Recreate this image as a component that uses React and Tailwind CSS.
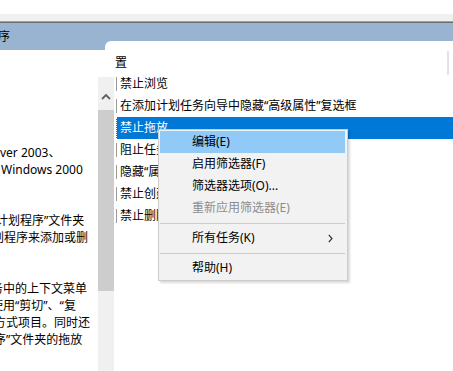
import React from "react";

const leftLines = [
  { t: "ver 2003、", ml: "ml-[0px]" },
  { t: "Windows 2000", ml: "ml-[1px]" },
  { t: "\u00a0", ml: "" },
  { t: "\u00a0", ml: "" },
  { t: "计划程序”文件夹", ml: "ml-[-4px]" },
  { t: "划程序来添加或删", ml: "ml-[-8px]" },
  { t: "\u00a0", ml: "" },
  { t: "\u00a0", ml: "" },
  { t: "务中的上下文菜单", ml: "ml-[-9px]" },
  { t: "使用“剪切”、“复", ml: "ml-[-9px]" },
  { t: "方式项目。同时还", ml: "ml-[-6px]" },
  { t: "序”文件夹的拖放", ml: "ml-[-6px]" },
];

const rows = [
  "禁止浏览",
  "在添加计划任务向导中隐藏“高级属性”复选框",
  "禁止拖放",
  "阻止任务运行或结束",
  "隐藏“属性”选项卡",
  "禁止创建新任务",
  "禁止删除任务",
];

function MenuItem({ children, active, disabled, arrow }) {
  return (
    <div
      className={
        "h-[22px] flex items-center pl-[32px] pr-[12px] mr-[2px] " +
        (active ? "bg-[#91c9f7] " : "") +
        (disabled ? "text-[#8d8d8d]" : "text-black")
      }
    >
      <span className="flex-1">{children}</span>
      {arrow && (
        <svg width="5" height="9" viewBox="0 0 5 9">
          <path d="M0.8 0.8 L4 4.5 L0.8 8.2" fill="none" stroke="#333" strokeWidth="1.2" />
        </svg>
      )}
    </div>
  );
}

function Sep() {
  return (
    <div className="h-[8px] flex items-center mr-[2px]">
      <div className="h-[1px] w-full bg-[#cccccc]" />
    </div>
  );
}

export default function App() {
  return (
    <div className="w-[453px] h-[371px] overflow-hidden bg-white relative font-['Noto_Sans','Noto_Sans_CJK_SC',sans-serif] text-[12px] text-black">
      <div className="h-[14px] bg-white" />
      <div className="h-[7px] bg-[#f0f0f0]" />
      <div className="h-[1px] bg-[#a0a0a0]" />
      <div className="h-[1px] bg-[#6d6d6d]" />
      <div className="flex h-[348px] bg-[#99b4d1]">
        {/* left description pane */}
        <div className="w-[98px] flex flex-col">
          <div className="h-[27px] flex items-center leading-[18px] ml-[-2px]">序</div>
          <div className="flex-1 bg-white overflow-hidden pt-[94px] leading-[17px] whitespace-nowrap">
            {leftLines.map((l, i) => (
              <div key={i} className={l.ml}>
                {l.t}
              </div>
            ))}
          </div>
        </div>
        {/* right pane */}
        <div className="flex-1 flex flex-col">
          <div className="h-[18px]" />
          <div className="flex-1 flex">
            <div className="w-[7px] flex flex-col">
              <div className="h-[9px]" />
              <div className="flex-1 bg-white" />
            </div>
            <div className="flex-1 bg-white rounded-tl-[6px] flex">
              {/* scrollbar */}
              <div className="ml-[-7px] w-[16px] flex flex-col">
                <div className="h-[36px]" />
                <div className="flex-1 bg-[#f0f0f0] flex flex-col">
                  <div className="h-[33px] flex justify-center pt-[16px]">
                    <svg width="10" height="7" viewBox="0 0 10 7">
                      <path d="M1 6 L5 2 L9 6" fill="none" stroke="#606060" strokeWidth="1.8" />
                    </svg>
                  </div>
                  <div className="h-[181px] bg-[#cdcdcd]" />
                </div>
              </div>
              {/* list */}
              <div className="flex-1 flex flex-col whitespace-nowrap overflow-hidden">
                <div className="h-[32px] flex justify-between items-start">
                  <div className="pl-[1px] pt-[13px] leading-[18px]">置</div>
                  <div className="w-[2px] h-[24px] mt-[10px] mr-[4px] bg-[#e3e3e3]" />
                </div>
                {rows.map((r, i) =>
                  i === 2 ? (
                    <div key={i} className="h-[22px] flex pl-[2px]">
                      <div className="flex-1 bg-[#0078d7] text-white border-l border-dotted border-white pl-[3px] flex items-center">
                        {r}
                      </div>
                    </div>
                  ) : (
                    <div key={i} className="h-[22px] flex items-center">
                      <div className="ml-[2px] w-[1px] h-[14px] bg-[#9a9a9a]" />
                      <div className="pl-[3px]">{r}</div>
                    </div>
                  )
                )}
              </div>
            </div>
          </div>
        </div>
      </div>

      {/* context menu */}
      <div className="absolute left-[158px] top-[129px] w-[190px] border border-[#cccccc] bg-[#f2f2f2] pt-[1px] pb-[1px] pl-[1px] shadow-[2px_2px_2px_rgba(0,0,0,0.15)]">
        <MenuItem active>编辑(E)</MenuItem>
        <MenuItem>启用筛选器(F)</MenuItem>
        <MenuItem>筛选器选项(O)...</MenuItem>
        <MenuItem disabled>重新应用筛选器(E)</MenuItem>
        <Sep />
        <MenuItem arrow>所有任务(K)</MenuItem>
        <Sep />
        <MenuItem>帮助(H)</MenuItem>
      </div>
    </div>
  );
}
